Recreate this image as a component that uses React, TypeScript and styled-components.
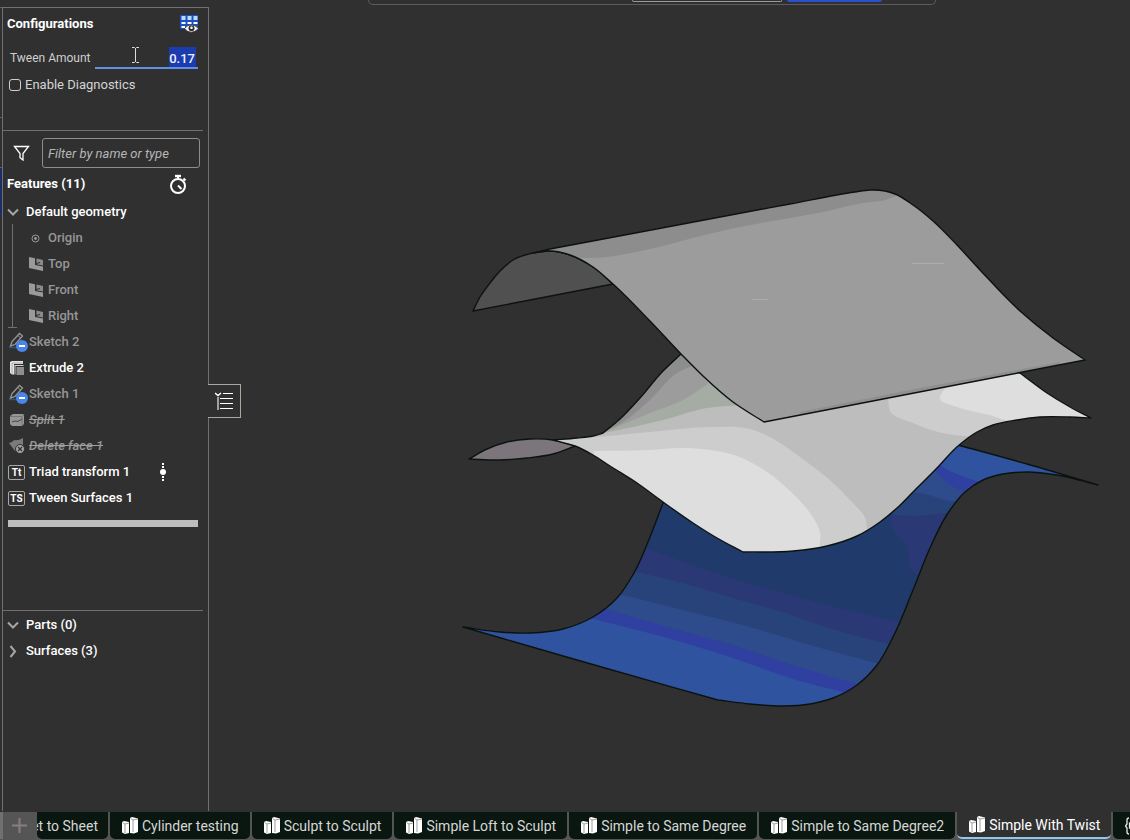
import React from 'react';
import styled, { createGlobalStyle, css } from 'styled-components';

const GlobalStyle = createGlobalStyle`
  *, *::before, *::after { box-sizing: border-box; }
  body {
    margin: 0;
    background: #303030;
    color: #fff;
    font-family: Roboto, "Liberation Sans", sans-serif;
    font-size: 14px;
    line-height: 20px;
  }
  button, input { font: inherit; color: inherit; }
  ul { list-style: none; margin: 0; padding: 0; }
  svg { display: block; flex: none; }
`;

const Page = styled.div`
  min-height: 100vh;
  display: flex;
  flex-direction: column;
  overflow: hidden;
`;

const TopStrip = styled.header`
  height: 7px;
  display: flex;
  align-items: flex-start;
  justify-content: center;
  padding-left: 174px;
`;

const DialogFoot = styled.div`
  width: 568px;
  height: 5px;
  display: flex;
  justify-content: flex-end;
  gap: 5px;
  padding-right: 53px;
  border: 1px solid #5c5c5c;
  border-top: 0;
  border-radius: 0 0 6px 6px;
`;

const FootInput = styled.input`
  width: 150px;
  height: 2px;
  padding: 0;
  background: transparent;
  border: 1px solid #999;
  border-top: 0;
  border-radius: 0 0 3px 3px;
`;

const FootButton = styled.button`
  width: 95px;
  height: 2px;
  padding: 0;
  border: 0;
  border-radius: 0 0 3px 3px;
  background: #2a4fcf;
`;

const Main = styled.main`
  flex: 1;
  display: flex;
`;

const Rail = styled.div`
  width: 2px;
  display: flex;
  flex-direction: column;
  border-top: 1px solid #606060;
`;

const RailBlock = styled.div<{ $height: number; $active?: boolean }>`
  height: ${p => p.$height}px;
  border-bottom: 1px solid ${p => (p.$active ? '#303030' : '#606060')};
  background: ${p => (p.$active ? '#1b2f66' : 'transparent')};
`;

const Panel = styled.aside`
  width: 207px;
  flex: none;
  display: flex;
  flex-direction: column;
  border: 1px solid #707070;
  border-bottom: 0;
`;

const ConfigSection = styled.section`
  height: 123px;
  margin-right: 5px;
  border-bottom: 1px solid #707070;
`;

const FeatureSection = styled.section`
  flex: 1;
  margin-right: 5px;
  padding-top: 7px;
  border-bottom: 1px solid #707070;
`;

const ResultSection = styled.section`
  flex: 0 0 200px;
`;

const TitleRow = styled.div<{ $height: number; $right: number }>`
  height: ${p => p.$height}px;
  display: flex;
  align-items: center;
  justify-content: space-between;
  padding: 0 ${p => p.$right}px 0 4px;
`;

const Title = styled.h2`
  margin: 0;
  font-size: 13px;
  line-height: 20px;
  font-weight: 700;
`;

const ParamRow = styled.div`
  position: relative;
  display: flex;
  align-items: center;
  height: 22px;
  margin: 7px 0 6px;
  padding-left: 7px;
  color: #cfcfcf;
`;

const ParamLabel = styled.label`
  width: 85px;
  font-size: 12px;
  white-space: nowrap;
`;

const ParamInput = styled.input`
  width: 103px;
  height: 22px;
  padding: 2px 3px 0 0;
  border: 0;
  border-bottom: 2px solid #5f8fe6;
  outline: 0;
  text-align: right;
  font-size: 13px;
  font-weight: 500;
  color: #eef2ff;
  background: linear-gradient(#1a3cae, #1a3cae) right 2px top / 27px 20px no-repeat;
`;

const TextCursor = styled.svg`
  position: absolute;
  left: 128px;
  top: 0;
`;

const CheckRow = styled.label`
  display: flex;
  align-items: center;
  gap: 4px;
  padding-left: 6px;
  font-size: 13px;
  color: #d4d4d4;
`;

const CheckBox = styled.input`
  appearance: none;
  width: 12px;
  height: 12px;
  margin: 0;
  border: 1px solid #d0d0d0;
  border-radius: 3px;
`;

const FilterRow = styled.div`
  display: flex;
  align-items: center;
  gap: 12px;
  padding: 0 3px 0 10px;
  margin-bottom: 2px;
`;

const FilterInput = styled.input`
  flex: 1;
  min-width: 0;
  height: 30px;
  padding: 0 5px;
  border: 1px solid #8d8d8d;
  border-radius: 3px;
  background: transparent;
  font-size: 13px;
  font-style: italic;
  &::placeholder { color: #b5b5b5; opacity: 1; }
`;

const IconButton = styled.button`
  display: flex;
  padding: 0;
  border: 0;
  background: none;
`;

type Tone = 'bright' | 'muted' | 'suppressed';

const Row = styled.li<{ $tone?: Tone; $indent?: number; $gap?: number }>`
  height: 26px;
  display: flex;
  align-items: center;
  gap: ${p => p.$gap ?? 4}px;
  padding-top: 2px;
  padding-left: ${p => p.$indent ?? 5}px;
  font-size: 13px;
  font-weight: 500;
  color: ${p => (p.$tone === 'bright' ? '#fff' : '#969696')};
  ${p => p.$tone === 'suppressed' && css`
    font-style: italic;
    text-decoration: line-through;
    text-decoration-color: #a0a0a0;
  `}
`;

const RowMenu = styled.button`
  margin-left: auto;
  margin-right: 37px;
  padding: 0;
  border: 0;
  background: none;
`;

const GeometryList = styled.ul`
  position: relative;
  margin-left: 9px;
  border-left: 1px solid #707070;
  &::after {
    content: '';
    position: absolute;
    left: -5px;
    bottom: 0;
    width: 9px;
    height: 1px;
    background: #707070;
  }
`;

const RollbackBar = styled.div`
  height: 7px;
  margin: 10px 0 0 5px;
  width: 190px;
  background: #bdbdbd;
`;

const Badge = styled.span`
  width: 17px;
  height: 15px;
  border: 1px solid #a8a8a8;
  border-radius: 2px;
  font-size: 10px;
  line-height: 13px;
  font-weight: 700;
  text-align: center;
`;

const Viewport = styled.div`
  position: relative;
  flex: 1;
  min-width: 0;
  display: flex;
`;

const Scene = styled.svg`
  width: 100%;
  height: auto;
  flex: 1;
  min-width: 0;
`;

const PanelToggle = styled.button`
  position: absolute;
  left: -1px;
  top: 377px;
  width: 33px;
  height: 34px;
  padding: 0 0 0 7px;
  border: 1px solid #a3ab9f;
  border-left: 0;
  background: #303030;
`;

const TabBar = styled.nav`
  display: flex;
  height: 29px;
  gap: 2px;
  padding-bottom: 1px;
  background: #555;
  border-top: 1px solid #303030;
  overflow: hidden;
`;

const AddTab = styled.button`
  flex: none;
  width: 37px;
  margin-right: -2px;
  padding: 0 0 0 9px;
  border: 0;
  border-left: 3px solid #707070;
  background: #555;
`;

const Tab = styled.button<{ $active?: boolean; $clipped?: boolean }>`
  flex: none;
  display: flex;
  align-items: center;
  justify-content: ${p => (p.$clipped ? 'flex-end' : 'flex-start')};
  gap: 4px;
  ${p => p.$clipped && 'width: 71px;'}
  padding: 0 ${p => (p.$clipped ? '10px 0 0' : '11px 0 12px')};
  border: 0;
  border-bottom: ${p => (p.$active ? '2px solid #8fc7ee' : '0')};
  border-radius: 0 0 5px 5px;
  background: ${p => (p.$active ? '#303030' : '#0a1710')};
  color: ${p => (p.$active ? '#fff' : '#d6d6d6')};
  overflow: hidden;
  white-space: nowrap;
`;

/* ---------- icons ---------- */

const TableEyeIcon = () => (
  <svg width="19" height="20" viewBox="0 0 19 20">
    <path d="M0 1h18v14H0z" fill="#1c4fc4" />
    <path d="M1.500 2h4v4h-4zM7.500 2h4v4h-4zM13.500 2h4v4h-4z" fill="#b5dcf8" />
    <path d="M1.500 8h4v2h-4zM7.500 8h4v2h-4zM13.500 8h4v2h-4zM1.500 12H5v2H1.500z" fill="#fff" />
    <path d="M4.500 14.500Q11 7 18.500 14.500Q11 22 4.500 14.500z" fill="#fff" stroke="#303030" strokeWidth=".8" />
    <circle cx="11.500" cy="14.300" r="3" fill="#303030" />
    <circle cx="11.500" cy="13.800" r="1.300" fill="#fff" />
  </svg>
);

const FunnelIcon = () => (
  <svg width="17" height="16" viewBox="0 0 17 16" fill="none" stroke="#fff" strokeWidth="1.300">
    <path d="M1.500 1.500h14L10 8.500v6.500L7 12.700V8.500z" />
  </svg>
);

const StopwatchIcon = () => (
  <svg width="18" height="20" viewBox="0 0 18 20" fill="none" stroke="#fff" strokeWidth="2">
    <circle cx="9" cy="12" r="7" />
    <path d="M9 2v3M14.500 4.500l2 2M9 11.500l3.500 3.500" />
    <path d="M6 2h6" strokeWidth="2.400" />
  </svg>
);

const ChevronIcon = ({ open }: { open?: boolean }) => (
  <svg width="13" height="13" viewBox="0 0 13 13" fill="none" stroke="#a6a6a6" strokeWidth="2">
    <path d={open ? 'M1 3.500l5 5 5-5' : 'M3.500 1l4.500 5.500-4.500 5.500'} />
  </svg>
);

const OriginIcon = () => (
  <svg width="9" height="9" viewBox="0 0 9 9">
    <circle cx="4.500" cy="4.500" r="3.500" fill="none" stroke="#9a9a9a" />
    <circle cx="4.500" cy="4.500" r="1.400" fill="#9a9a9a" />
  </svg>
);

const PlaneIcon = () => (
  <svg width="14" height="14" viewBox="0 0 14 14">
    <path d="M0 0l6 1.200V8l8 1.500V14L0 11z" fill="#9a9a9a" />
    <path d="M7.500 1.500L14 3v5.500l-6.500-1.300z" fill="#8a8a8a" />
    <path d="M7 6.500l4-1" stroke="#303030" strokeWidth="1" />
  </svg>
);

const SketchIcon = () => (
  <svg width="20" height="20" viewBox="0 0 20 20">
    <path d="M1 15.500h9" stroke="#36507e" strokeWidth="1.500" />
    <path d="M2.500 14L4 9.500 11.500 1.500l3 2.500L7 12.500z" fill="none" stroke="#979797" strokeWidth="1.300" />
    <path d="M10 3.500l2.500 2.500M2.500 14l3-1" stroke="#979797" />
    <circle cx="14" cy="14" r="6" fill="#4a86ea" />
    <path d="M11 14h6" stroke="#fff" strokeWidth="2" />
  </svg>
);

const ExtrudeIcon = () => (
  <svg width="16" height="16" viewBox="0 0 16 16">
    <path d="M1 2l2-1h11v3H5v10.500H3L1 13z" fill="#e4e4e4" />
    <path d="M3 3v11M3 3h11" fill="none" stroke="#9a9a9a" strokeWidth=".8" />
    <path d="M6 5.500h8.500" stroke="#cfcfcf" />
    <path d="M6 5v9.500" stroke="#cfcfcf" />
    <path d="M7.500 7H15v8H7.500z" fill="#8e8e8e" />
  </svg>
);

const SplitIcon = () => (
  <svg width="16" height="15" viewBox="0 0 16 15">
    <path d="M1 3l3-2h10l1 1v9l-2 2H3l-2-2z" fill="#969696" />
    <path d="M1 3.500h12l2-2M13 3.500V13" fill="none" stroke="#6c6c6c" strokeWidth=".8" />
    <path d="M3 9l3-1 3 .5L13 6" fill="none" stroke="#444" />
  </svg>
);

const DeleteFaceIcon = () => (
  <svg width="16" height="16" viewBox="0 0 16 16">
    <path d="M0 5Q4 4 5 2q4 1 9-2v9l-8 4z" fill="#7b7b7b" />
    <circle cx="11" cy="11" r="4.500" fill="#a5a5a5" stroke="#303030" />
    <path d="M9 9l4 4M13 9l-4 4" stroke="#303030" strokeWidth="1.300" />
  </svg>
);

const InsertMarkIcon = () => (
  <svg width="6" height="18" viewBox="0 0 6 18" fill="#fff">
    <path d="M2 0h2v2H2zM2 3h2v2H2zM2 13h2v2H2zM2 16h2v2H2z" />
    <circle cx="3" cy="9" r="3" />
  </svg>
);

const ListToggleIcon = () => (
  <svg width="18" height="18" viewBox="0 0 18 18" fill="none">
    <path d="M0 1l3 2.500L6 1" stroke="#fff" strokeWidth="1.500" />
    <path d="M3 5v13" stroke="#a0a0a0" strokeWidth="2" />
    <path d="M8 1.500h10M5 6.500h13M5 11.500h13M5 16.500h13" stroke="#fff" />
  </svg>
);

const PartStudioIcon = () => (
  <svg width="16" height="17" viewBox="0 0 16 17">
    <path d="M0 5l2-1 5 1v11l-4 1-3-1.500zM8 1l2-1 6 1.500V15l-4 1.500L8 16z" fill="#fff" />
    <path d="M.5 5.500L3 7l4-1M3 7v9M8.500 1.500L11 3l5-1M11 3v12" fill="none" stroke="#777" strokeWidth=".7" />
  </svg>
);

const BracesIcon = () => (
  <svg width="16" height="18" viewBox="0 0 16 18" fill="none" stroke="#e8e8e8" strokeWidth="1.300">
    <path d="M4 1Q2 1 2 3v4L.5 9 2 11v4q0 2 2 2M12 1q2 0 2 2v4l1.500 2L14 11v4q0 2-2 2" />
    <path d="M8 4l4 2v5l-4 2.500L4.500 11V6zM4.500 6L8 8l4-2M8 8v5" />
  </svg>
);

const PlusIcon = () => (
  <svg width="15" height="15" viewBox="0 0 15 15">
    <path d="M7.500 0v15M0 7.500h15" stroke="#857f85" strokeWidth="2" />
  </svg>
);

/* ---------- surface geometry ---------- */

type Pt = [number, number];

const dist = (a: Pt, b: Pt) => Math.hypot(b[0] - a[0], b[1] - a[1]);

// Direction of travel at point i, weighted so that short neighbours do not kink the curve.
const tangent = (pts: Pt[], i: number): Pt => {
  const a = pts[Math.max(i - 1, 0)];
  const p = pts[i];
  const b = pts[Math.min(i + 1, pts.length - 1)];
  const la = dist(a, p);
  const lb = dist(p, b);
  if (!la || !lb) {
    const l = la + lb || 1;
    return [(b[0] - a[0]) / l, (b[1] - a[1]) / l];
  }
  const wa = lb / (la + lb);
  const wb = la / (la + lb);
  return [
    ((p[0] - a[0]) / la) * wa + ((b[0] - p[0]) / lb) * wb,
    ((p[1] - a[1]) / la) * wa + ((b[1] - p[1]) / lb) * wb,
  ];
};

// Smooth cubic segments through the points, continuing the current path.
const spline = (pts: Pt[]) =>
  pts.slice(1).map((p, i) => {
    const a = pts[i];
    const k = dist(a, p) / 3;
    const ta = tangent(pts, i);
    const tp = tangent(pts, i + 1);
    return `C${a[0] + ta[0] * k} ${a[1] + ta[1] * k} ${p[0] - tp[0] * k} ${p[1] - tp[1] * k} ${p[0]} ${p[1]}`;
  }).join('');

// Closed outline whose edges are separate splines joined at sharp corners.
const outline = (...edges: Pt[][]) =>
  `M${edges[0][0].join(' ')}` + edges.map(e => `L${e[0].join(' ')}` + spline(e)).join('') + 'Z';

const topSurface = outline(
  [[534, 253], [542, 251], [550, 249]],
  [[550, 249], [790, 204], [855, 192], [870, 190], [885, 191], [895, 194], [913, 205], [933, 221], [957, 245], [980, 270], [1020, 311], [1053, 338], [1085, 360]],
  [[1085, 360], [764, 422]],
  [[764, 422], [733, 402], [703, 376], [681, 354], [650, 321], [613, 284], [593, 267], [570, 255], [550, 251], [534, 253]],
);
const topUnderside = outline(
  [[473, 311], [480, 297], [490, 283], [500, 271], [513, 260], [533, 253], [550, 251], [570, 255], [593, 267], [613, 284]],
  [[613, 284], [473, 311]],
);
const topLit = outline(
  [[570, 257], [583, 258], [650, 249], [693, 238], [740, 227], [790, 218], [823, 212], [863, 203], [885, 200], [900, 194]],
  [[900, 194], [1090, 250], [1090, 360]],
  [[1085, 360], [764, 421], [560, 421]],
);
const middleSurface = outline(
  [[553, 440], [577, 438], [593, 436], [603, 433]],
  [[603, 433], [620, 419], [640, 398], [663, 371], [681, 354]],
  [[681, 354], [850, 340], [1020, 373]],
  [[1020, 373], [1047, 393], [1070, 407], [1091, 418]],
  [[1091, 418], [1070, 417], [1040, 417], [1017, 420], [993, 425], [977, 432], [958, 446], [937, 468], [913, 492], [897, 508], [880, 522], [857, 536], [827, 546], [793, 551], [743, 552]],
  [[743, 552], [717, 538], [693, 523], [663, 502], [637, 483], [610, 466], [593, 455], [575, 446], [553, 440]],
);
const middleUnderside = outline(
  [[469, 459], [487, 449], [507, 442], [530, 439], [553, 440], [575, 446]],
  [[575, 446], [553, 454], [527, 458], [500, 460], [469, 459]],
);
const middleBands: { fill: string; d: string }[] = [
  { fill: '#a5aca4', d: outline([[600, 434], [663, 420], [707, 408], [740, 405]], [[740, 405], [681, 340], [600, 434]]) },
  { fill: '#9c9c9c', d: outline([[600, 434], [650, 413], [683, 400], [708, 384]], [[708, 384], [681, 340]]) },
  { fill: '#8d8d8d', d: outline([[600, 434], [623, 422], [650, 400], [677, 373], [694, 365]], [[694, 365], [681, 340]]) },
  { fill: '#cdcdcd', d: outline([[545, 440], [583, 438], [650, 432], [710, 427], [750, 429], [780, 443], [800, 457], [833, 483], [850, 500], [866, 520], [866, 540]], [[866, 540], [800, 560]], [[740, 560], [545, 445]]) },
  { fill: '#dedede', d: outline([[594, 451], [650, 450], [680, 448], [710, 450], [737, 456], [767, 472], [790, 491], [810, 513], [820, 532], [819, 552]], [[819, 552], [743, 560]], [[743, 560], [594, 457]]) },
  { fill: '#cdcdcd', d: outline([[888, 398], [890, 411], [913, 423], [947, 434], [975, 437]], [[975, 437], [1100, 420]], [[1020, 365], [888, 398]]) },
  { fill: '#dedede', d: outline([[947, 385], [940, 399], [957, 407], [993, 416], [1010, 422]], [[1010, 422], [1100, 420]], [[1020, 365], [947, 385]]) },
];
const lowerSurface = outline(
  [[663, 503], [650, 537], [634, 573], [617, 598], [593, 617], [563, 629], [530, 633], [500, 632], [463, 627]],
  [[463, 627], [577, 660], [718, 700]],
  [[718, 700], [750, 704], [783, 706], [810, 704], [833, 698], [857, 685], [877, 665], [893, 637], [913, 590], [930, 548], [948, 513], [965, 492], [983, 480], [1003, 474], [1027, 472], [1057, 475], [1098, 485]],
  [[1098, 485], [1027, 464], [958, 445]],
  [[958, 445], [900, 440], [663, 503]],
);
const lowerBands: { fill: string; d: string }[] = [
  { fill: '#2a3875', d: outline([[640, 546], [690, 564], [730, 578], [783, 593], [843, 609], [910, 624]], [[910, 624], [900, 720], [600, 720]]) },
  { fill: '#2a3875', d: outline([[890, 518], [894, 532], [906, 544], [912, 570], [930, 580]], [[930, 580], [970, 500], [910, 490]]) },
  { fill: '#284379', d: outline([[630, 570], [697, 587], [740, 600], [783, 612], [817, 624], [850, 634], [905, 648]], [[905, 648], [900, 720]], [[450, 720], [450, 600]]) },
  { fill: '#2e4b8b', d: outline([[615, 593], [683, 610], [750, 627], [817, 647], [890, 667]], [[890, 667], [880, 720]], [[450, 720], [450, 600]]) },
  { fill: '#3040a0', d: outline([[602, 608], [657, 624], [733, 645], [783, 662], [870, 688]], [[870, 688], [870, 720]], [[450, 720], [450, 600]]) },
  { fill: '#30539f', d: outline([[590, 618], [667, 638], [733, 658], [793, 679], [850, 694]], [[850, 694], [850, 720]], [[450, 720], [450, 600]]) },
  { fill: '#284379', d: outline([[886, 514], [915, 516], [955, 512]], [[955, 512], [1100, 490]], [[950, 430], [886, 514]]) },
  { fill: '#2e4b8b', d: outline([[905, 492], [925, 494], [945, 500], [965, 502]], [[965, 502], [1100, 490]], [[950, 430], [905, 492]]) },
  { fill: '#3040a0', d: outline([[933, 468], [943, 479], [958, 489], [975, 492]], [[975, 492], [1100, 490]], [[950, 430], [933, 468]]) },
  { fill: '#30539f', d: outline([[936, 462], [948, 470], [965, 477], [985, 484]], [[985, 484], [1100, 490]], [[950, 430], [936, 462]]) },
];

const SurfaceScene = () => (
  <Scene viewBox="209 7 921 804" preserveAspectRatio="xMidYMid meet" role="img">
    <defs>
      <clipPath id="topClip"><path d={topSurface} /></clipPath>
      <clipPath id="middleClip"><path d={middleSurface} /></clipPath>
      <clipPath id="lowerClip"><path d={lowerSurface} /></clipPath>
    </defs>
    <g stroke="#0b1310" strokeWidth="1.400" strokeLinejoin="round">
      <path d={lowerSurface} fill="#213a6c" stroke="none" />
      <g clipPath="url(#lowerClip)" stroke="none">
        {lowerBands.map((b, i) => <path key={i} d={b.d} fill={b.fill} />)}
      </g>
      <path d={lowerSurface} fill="none" />

      <path d={middleUnderside} fill="#7c757b" />
      <path d={middleSurface} fill="#bdbdbd" stroke="none" />
      <g clipPath="url(#middleClip)" stroke="none">
        {middleBands.map((b, i) => <path key={i} d={b.d} fill={b.fill} />)}
      </g>
      <path d={middleSurface} fill="none" />

      <path d={topUnderside} fill="#505050" />
      <path d={topSurface} fill="#8d8d8d" stroke="none" />
      <g clipPath="url(#topClip)" stroke="none">
        <path d={topLit} fill="#9c9c9c" />
        <path d="M800 412L920 388L1060 362V370L800 418z" fill="#8f8f8f" />
      </g>
      <path d={topSurface} fill="none" />
      <path d="M752 299.500h16M912 263.500h32" stroke="#adadad" strokeWidth="1" />
    </g>
  </Scene>
);

/* ---------- page ---------- */

const features: { name: string; tone: Tone; icon: React.ReactNode; menu?: boolean; wide?: boolean }[] = [
  { name: 'Sketch 2', tone: 'muted', icon: <SketchIcon />, wide: true },
  { name: 'Extrude 2', tone: 'bright', icon: <ExtrudeIcon /> },
  { name: 'Sketch 1', tone: 'muted', icon: <SketchIcon />, wide: true },
  { name: 'Split 1', tone: 'suppressed', icon: <SplitIcon /> },
  { name: 'Delete face 1', tone: 'suppressed', icon: <DeleteFaceIcon /> },
  { name: 'Triad transform 1', tone: 'bright', icon: <Badge>Tt</Badge>, menu: true },
  { name: 'Tween Surfaces 1', tone: 'bright', icon: <Badge>TS</Badge> },
];

const tabs = [
  'Cylinder testing',
  'Sculpt to Sculpt',
  'Simple Loft to Sculpt',
  'Simple to Same Degree',
  'Simple to Same Degree2',
  'Simple With Twist',
];

const IconSlot = styled.span<{ $wide?: boolean }>`
  width: ${p => (p.$wide ? 20 : 17)}px;
  margin-right: ${p => (p.$wide ? -3 : 0)}px;
  display: flex;
  justify-content: center;
`;

export default function App() {
  return (
    <Page>
      <GlobalStyle />
      <TopStrip>
        <DialogFoot>
          <FootInput type="text" aria-label="Value" />
          <FootButton type="button" aria-label="Apply" />
        </DialogFoot>
      </TopStrip>
      <Main>
        <Rail>
          <RailBlock $height={110} />
          <RailBlock $height={50} />
          <RailBlock $height={50} $active />
        </Rail>
        <Panel>
          <ConfigSection>
            <TitleRow $height={32} $right={4}>
              <Title>Configurations</Title>
              <IconButton type="button" aria-label="Configuration visibility"><TableEyeIcon /></IconButton>
            </TitleRow>
            <ParamRow>
              <ParamLabel htmlFor="tween">Tween Amount</ParamLabel>
              <ParamInput id="tween" type="text" defaultValue="0.17" />
              <TextCursor width="9" height="18" viewBox="0 0 9 18" fill="none" stroke="#ddd">
                <path d="M1 .5h2.500l1 1 1-1H8M4.500 1v14M1 15.500h2.500l1-1 1 1H8" />
              </TextCursor>
            </ParamRow>
            <CheckRow>
              <CheckBox type="checkbox" />
              Enable Diagnostics
            </CheckRow>
          </ConfigSection>

          <FeatureSection>
            <FilterRow>
              <FunnelIcon />
              <FilterInput type="text" placeholder="Filter by name or type" aria-label="Filter" />
            </FilterRow>
            <TitleRow $height={28} $right={16}>
              <Title>Features (11)</Title>
              <IconButton type="button" aria-label="Regeneration times"><StopwatchIcon /></IconButton>
            </TitleRow>
            <ul>
              <Row $tone="bright" $gap={6} $indent={4}><ChevronIcon open />Default geometry</Row>
            </ul>
            <GeometryList>
              <Row $indent={18} $gap={8}><OriginIcon />Origin</Row>
              <Row $indent={16} $gap={5}><PlaneIcon />Top</Row>
              <Row $indent={16} $gap={5}><PlaneIcon />Front</Row>
              <Row $indent={16} $gap={5}><PlaneIcon />Right</Row>
            </GeometryList>
            <ul>
              {features.map(f => (
                <Row key={f.name} $tone={f.tone}>
                  <IconSlot $wide={f.wide}>{f.icon}</IconSlot>
                  {f.name}
                  {f.menu && <RowMenu type="button" aria-label="Insert point"><InsertMarkIcon /></RowMenu>}
                </Row>
              ))}
            </ul>
            <RollbackBar />
          </FeatureSection>

          <ResultSection>
            <ul>
              <Row $tone="bright" $gap={6} $indent={4}><ChevronIcon open />Parts (0)</Row>
              <Row $tone="bright" $gap={6} $indent={4}><ChevronIcon />Surfaces (3)</Row>
            </ul>
          </ResultSection>
        </Panel>
        <Viewport>
          <SurfaceScene />
          <PanelToggle type="button" aria-label="Toggle feature list"><ListToggleIcon /></PanelToggle>
        </Viewport>
      </Main>
      <TabBar>
        <AddTab type="button" aria-label="Add tab"><PlusIcon /></AddTab>
        <Tab type="button" $clipped>et to Sheet</Tab>
        {tabs.map(t => (
          <Tab key={t} type="button" $active={t === 'Simple With Twist'}>
            <PartStudioIcon />
            {t}
          </Tab>
        ))}
        <Tab type="button" aria-label="Feature Studio"><BracesIcon /></Tab>
      </TabBar>
    </Page>
  );
}
